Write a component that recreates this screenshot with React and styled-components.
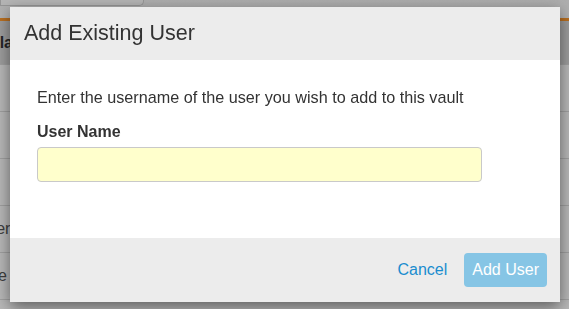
import React from 'react';
import styled, { createGlobalStyle } from 'styled-components';

const GlobalStyle = createGlobalStyle`
  html, body {
    margin: 0;
    padding: 0;
    background: #fff;
    font-family: "Liberation Sans", Arial, sans-serif;
    overflow: hidden;
  }
`;

const Page = styled.div`
  width: 569px;
  height: 309px;
  overflow: hidden;
  background: #fff;
`;

const TopBar = styled.div`
  height: 18px;
  display: flex;
  align-items: flex-start;
  background: linear-gradient(#f0f0f0, #f8f8f8);
`;

const Tab = styled.div`
  width: 142px;
  height: 5px;
  background: #fafafa;
  border: 1px solid #cfcfcf;
  border-top: none;
  border-bottom-right-radius: 5px;
`;

const Accent = styled.div`
  height: 3px;
  background: #ff9a2e;
`;

const Table = styled.div`
  margin-left: -43px;
  display: flex;
  flex-direction: column;
`;

const Row = styled.div`
  display: flex;
  align-items: center;
  height: ${(p) => (p.$head ? 44 : 47)}px;
  padding-left: 8px;
  background: ${(p) => (p.$head ? '#dadada' : '#fff')};
  border-bottom: 1px solid #dedede;
  box-sizing: border-box;
  font-size: 16px;
  font-weight: ${(p) => (p.$head ? 700 : 400)};
  color: ${(p) => (p.$head ? '#333' : '#555')};
  white-space: nowrap;
`;

const Overlay = styled.div`
  position: fixed;
  inset: 0;
  background: rgba(0, 0, 0, 0.28);
`;

const Modal = styled.div`
  position: fixed;
  top: 7px;
  left: 10px;
  width: 550px;
  height: 295px;
  display: flex;
  flex-direction: column;
  background: #fff;
  box-shadow: 0 5px 15px rgba(0, 0, 0, 0.5);
`;

const Header = styled.div`
  height: 53px;
  display: flex;
  align-items: center;
  padding: 0 14px;
  background: #ececec;
`;

const Title = styled.h4`
  margin: 0;
  font-size: 21.5px;
  font-weight: 400;
  color: #333;
`;

const Body = styled.div`
  flex: 1;
  padding: 27px 27px 0;
  display: flex;
  flex-direction: column;
`;

const Intro = styled.p`
  margin: 0;
  font-size: 16.2px;
  line-height: 20px;
  color: #333;
`;

const Label = styled.label`
  margin-top: 15px;
  font-size: 16px;
  line-height: 20px;
  font-weight: 700;
  color: #333;
`;

const Input = styled.input`
  margin-top: 5px;
  width: 445px;
  height: 35px;
  box-sizing: border-box;
  border: 1px solid #c9c9c9;
  border-radius: 4px;
  background: #ffffcc;
  font-family: inherit;
  font-size: 16px;
  padding: 0 10px;
  outline: none;
`;

const Footer = styled.div`
  height: 64px;
  display: flex;
  align-items: center;
  justify-content: flex-end;
  gap: 17px;
  padding: 0 13px;
  background: #ececec;
`;

const LinkButton = styled.button`
  border: none;
  background: none;
  padding: 0;
  font-family: inherit;
  font-size: 16px;
  color: #1a8dcf;
  cursor: pointer;
`;

const Primary = styled.button`
  height: 34px;
  padding: 0 8px;
  border: none;
  border-radius: 4px;
  background: #86c5e5;
  color: #fff;
  font-family: inherit;
  font-size: 16px;
  cursor: default;
`;

const rows = ['Bob', 'Ann', 'Tom', 'Power', 'Jesse'];

export default function App() {
  return (
    <>
      <GlobalStyle />
      <Page>
        <TopBar>
          <Tab />
        </TopBar>
        <Accent />
        <Table>
          <Row $head>Display Name</Row>
          {rows.map((r) => (
            <Row key={r}>{r}</Row>
          ))}
        </Table>
      </Page>
      <Overlay />
      <Modal>
        <Header>
          <Title>Add Existing User</Title>
        </Header>
        <Body>
          <Intro>Enter the username of the user you wish to add to this vault</Intro>
          <Label htmlFor="username">User Name</Label>
          <Input id="username" />
        </Body>
        <Footer>
          <LinkButton>Cancel</LinkButton>
          <Primary disabled>Add User</Primary>
        </Footer>
      </Modal>
    </>
  );
}
